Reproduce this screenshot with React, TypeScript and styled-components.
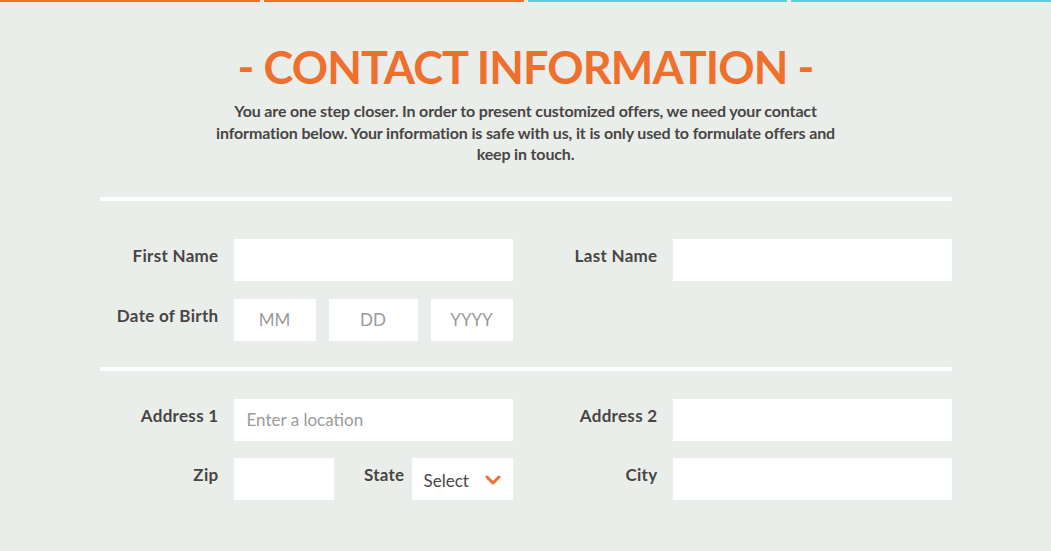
import styled, { createGlobalStyle } from "styled-components"

const GlobalStyle = createGlobalStyle`
  html, body {
    margin: 0;
    padding: 0;
    background: #e9eeea;
  }
  body {
    font-family: Lato, "Open Sans", sans-serif;
    color: #4a4545;
  }
`

const Page = styled.main`
  min-height: 551px;
  background: #e9eeea;
`

const Progress = styled.div`
  display: flex;
  gap: 4px;
`

const Segment = styled.span<{ $done: boolean }>`
  flex: 1;
  height: 2px;
  background: ${(p) => (p.$done ? "#ef6f2c" : "#5ccfd6")};
`

const Header = styled.header`
  display: flex;
  flex-direction: column;
  align-items: center;
  padding-top: 38px;
`

const Title = styled.h1`
  margin: 0;
  font-size: 45px;
  line-height: 54px;
  font-weight: 700;
  color: #ef6f2c;
  letter-spacing: -0.9px;
`

const Intro = styled.p`
  margin: 6px 0 0;
  width: 640px;
  text-align: center;
  font-size: 16px;
  line-height: 21.5px;
  font-weight: 700;
  letter-spacing: -0.15px;
  color: #4a4545;
`

const Form = styled.form`
  width: 852px;
  margin: 0 auto;
`

const Divider = styled.hr<{ $gap?: number }>`
  height: 4px;
  margin: ${(p) => p.$gap ?? 0}px 0 0;
  border: none;
  border-radius: 2px;
  background: #ffffff;
`

const Section = styled.div<{ $top: number; $bottom: number; $rowGap: number }>`
  display: grid;
  grid-template-columns: 119px 279px 130px 279px;
  column-gap: 15px;
  row-gap: ${(p) => p.$rowGap}px;
  padding: ${(p) => p.$top}px 0 ${(p) => p.$bottom}px;
`

const Label = styled.label`
  text-align: right;
  font-size: 17px;
  line-height: 34px;
  font-weight: 700;
  letter-spacing: 0.3px;
  color: #4a4545;
  white-space: nowrap;
`

const Input = styled.input<{ $center?: boolean; $width?: number }>`
  box-sizing: border-box;
  height: 42px;
  width: ${(p) => (p.$width ? `${p.$width}px` : "100%")};
  min-width: 0;
  padding: 0 13px;
  border: none;
  outline: none;
  background: #ffffff;
  font-family: Lato, sans-serif;
  font-size: 17px;
  color: #4a4545;
  text-align: ${(p) => (p.$center ? "center" : "left")};

  &::placeholder {
    color: #9a9a9a;
  }
`

const DateParts = styled.div`
  display: grid;
  grid-template-columns: 82px 89px 82px;
  justify-content: space-between;
`

const Inline = styled.div`
  display: flex;
  align-items: flex-start;
`

const InlineLabel = styled(Label)`
  flex: 1;
  padding-right: 7px;
`

const SelectBox = styled.div`
  box-sizing: border-box;
  width: 101px;
  height: 42px;
  padding: 3px 12px 0;
  display: flex;
  align-items: center;
  justify-content: space-between;
  background: #ffffff;
  font-size: 17px;
  color: #4a4545;
`

const Chevron = () => (
  <svg width="16" height="10" viewBox="0 0 16 10">
    <polyline
      points="2,2 8,8 14,2"
      fill="none"
      stroke="#ef6f2c"
      strokeWidth="3"
      strokeLinecap="round"
      strokeLinejoin="round"
    />
  </svg>
)

const Empty = styled.div``

export default function App() {
  return (
    <Page>
      <GlobalStyle />
      <Progress>
        <Segment $done />
        <Segment $done />
        <Segment $done={false} />
        <Segment $done={false} />
      </Progress>
      <Header>
        <Title>- CONTACT INFORMATION -</Title>
        <Intro>
          You are one step closer. In order to present customized offers, we need your contact
          <br />
          information below. Your information is safe with us, it is only used to formulate offers and
          <br />
          keep in touch.
        </Intro>
      </Header>
      <Form onSubmit={(e) => e.preventDefault()}>
        <Divider $gap={32} />
        <Section $top={38} $bottom={26} $rowGap={18}>
          <Label>First Name</Label>
          <Input type="text" />
          <Label>Last Name</Label>
          <Input type="text" />

          <Label>Date of Birth</Label>
          <DateParts>
            <Input $center placeholder="MM" />
            <Input $center placeholder="DD" />
            <Input $center placeholder="YYYY" />
          </DateParts>
          <Empty />
          <Empty />
        </Section>
        <Divider />
        <Section $top={28} $bottom={40} $rowGap={17}>
          <Label>Address 1</Label>
          <Input placeholder="Enter a location" />
          <Label>Address 2</Label>
          <Input type="text" />

          <Label>Zip</Label>
          <Inline>
            <Input $width={100} />
            <InlineLabel>State</InlineLabel>
            <SelectBox>
              Select
              <Chevron />
            </SelectBox>
          </Inline>
          <Label>City</Label>
          <Input type="text" />
        </Section>
      </Form>
    </Page>
  )
}
